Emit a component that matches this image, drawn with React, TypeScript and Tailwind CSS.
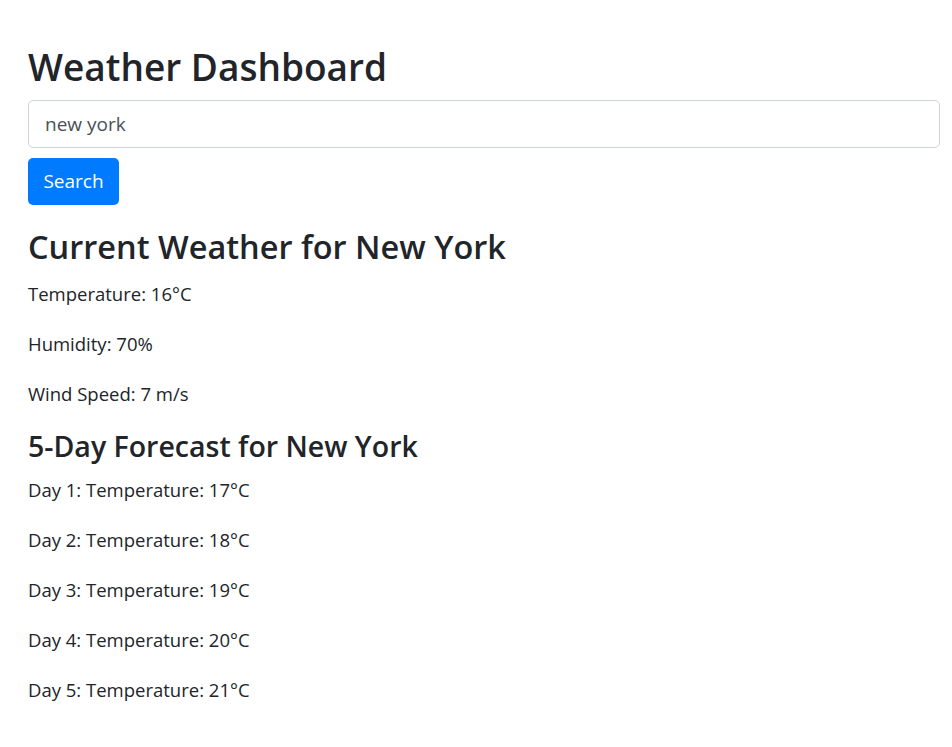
export default function App() {
  const days = [17, 18, 19, 20, 21];

  return (
    <div className="min-h-screen bg-white pl-[28px] pr-[12px] pt-[44px] text-[#212529] font-['Open_Sans',sans-serif]">
      <h1 className="text-[37px] font-semibold leading-[46px] mb-[10px]">Weather Dashboard</h1>

      <input
        type="text"
        defaultValue="new york"
        className="block w-full h-[48px] px-[16px] text-[19px] text-[#495057] border border-[#ced4da] rounded-[5px] outline-none mb-[10px]"
      />
      <button className="h-[47px] w-[91px] bg-[#007bff] text-white text-[19px] rounded-[5px]">Search</button>

      <h2 className="text-[32.5px] font-semibold leading-[40px] mt-[22px] mb-[12px]">Current Weather for New York</h2>
      <p className="text-[18.5px] leading-[30px] mb-[20px]">Temperature: 16°C</p>
      <p className="text-[18.5px] leading-[30px] mb-[20px]">Humidity: 70%</p>
      <p className="text-[18.5px] leading-[30px] mb-[20px]">Wind Speed: 7 m/s</p>

      <h3 className="text-[28.5px] font-semibold leading-[35px] mb-[11px]">5-Day Forecast for New York</h3>
      {days.map((t, i) => (
        <p key={i} className="text-[18.5px] leading-[30px] mb-[20px]">
          Day {i + 1}: Temperature: {t}°C
        </p>
      ))}
    </div>
  );
}
